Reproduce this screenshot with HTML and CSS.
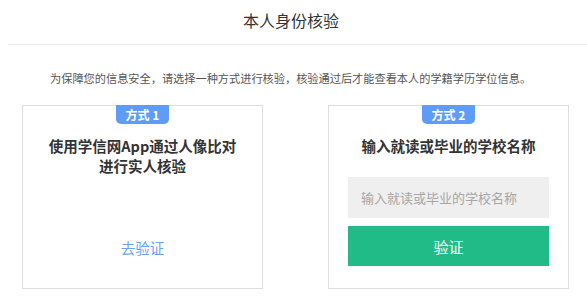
FILE: index.html
```html
<!DOCTYPE html>
<html lang="zh-CN">
<head>
<meta charset="utf-8">
<title>本人身份核验</title>
<link rel="stylesheet" href="styles.css">
</head>
<body>
  <header class="header">
    <h1 class="title">本人身份核验</h1>
  </header>
  <p class="desc">为保障您的信息安全，请选择一种方式进行核验，核验通过后才能查看本人的学籍学历学位信息。</p>
  <div class="cards">
    <section class="card">
      <div class="badge">方式 1</div>
      <h2 class="card-title">使用学信网App通过人像比对<br>进行实人核验</h2>
      <a class="link" href="#">去验证</a>
    </section>
    <section class="card">
      <div class="badge">方式 2</div>
      <h2 class="card-title">输入就读或毕业的学校名称</h2>
      <form class="form">
        <input class="input" type="text" placeholder="输入就读或毕业的学校名称">
        <button class="btn" type="button">验证</button>
      </form>
    </section>
  </div>
</body>
</html>
```

FILE: styles.css
```css
* { box-sizing: border-box; }
html, body { margin: 0; padding: 0; background: #fff; }
body {
  font-family: "Noto Sans CJK SC", "Noto Sans", sans-serif;
  color: #333;
  width: 587px;
  height: 305px;
  overflow: hidden;
}
.header {
  margin-left: 8px;
  border-bottom: 1px solid #e8e8e8;
  padding: 8px 13px 12px 0;
}
.title {
  margin: 0;
  font-size: 16px;
  font-weight: 400;
  line-height: 24px;
  text-align: center;
  color: #333;
}
.desc {
  margin: 25px 0 0;
  padding-left: 50px;
  font-size: 11.2px;
  line-height: 16px;
  color: #555;
  white-space: nowrap;
}
.cards {
  display: flex;
  gap: 65px;
  padding-left: 22px;
  margin-top: 19px;
}
.card {
  width: 241px;
  height: 184px;
  border: 1px solid #dedede;
  display: flex;
  flex-direction: column;
  align-items: center;
  padding: 0 19px;
}
.badge {
  margin-top: -1px;
  width: 53px;
  height: 19px;
  background: #5e9cf8;
  color: #fff;
  font-size: 12px;
  font-weight: 700;
  line-height: 19px;
  text-align: center;
  border-radius: 0 0 5px 5px;
}
.card-title {
  margin: 12px 0 0;
  font-size: 14.5px;
  font-weight: 700;
  line-height: 20px;
  text-align: center;
  color: #333;
}
.link {
  margin-top: 62px;
  font-size: 14.5px;
  line-height: 20px;
  color: #6aa1f7;
  text-decoration: none;
}
.form {
  align-self: stretch;
  display: flex;
  flex-direction: column;
  gap: 8px;
  margin: 21px 0 0;
}
.input {
  height: 41px;
  border: none;
  background: #efefef;
  padding: 0 13px;
  font-family: "Noto Sans CJK SC", "Noto Sans", sans-serif;
  font-size: 13px;
  color: #333;
  outline: none;
}
.input::placeholder { color: #a6a6a6; }
.btn {
  height: 40px;
  border: none;
  background: #21bb87;
  color: #fff;
  font-family: "Noto Sans CJK SC", "Noto Sans", sans-serif;
  font-size: 15px;
  padding: 0;
}
```
